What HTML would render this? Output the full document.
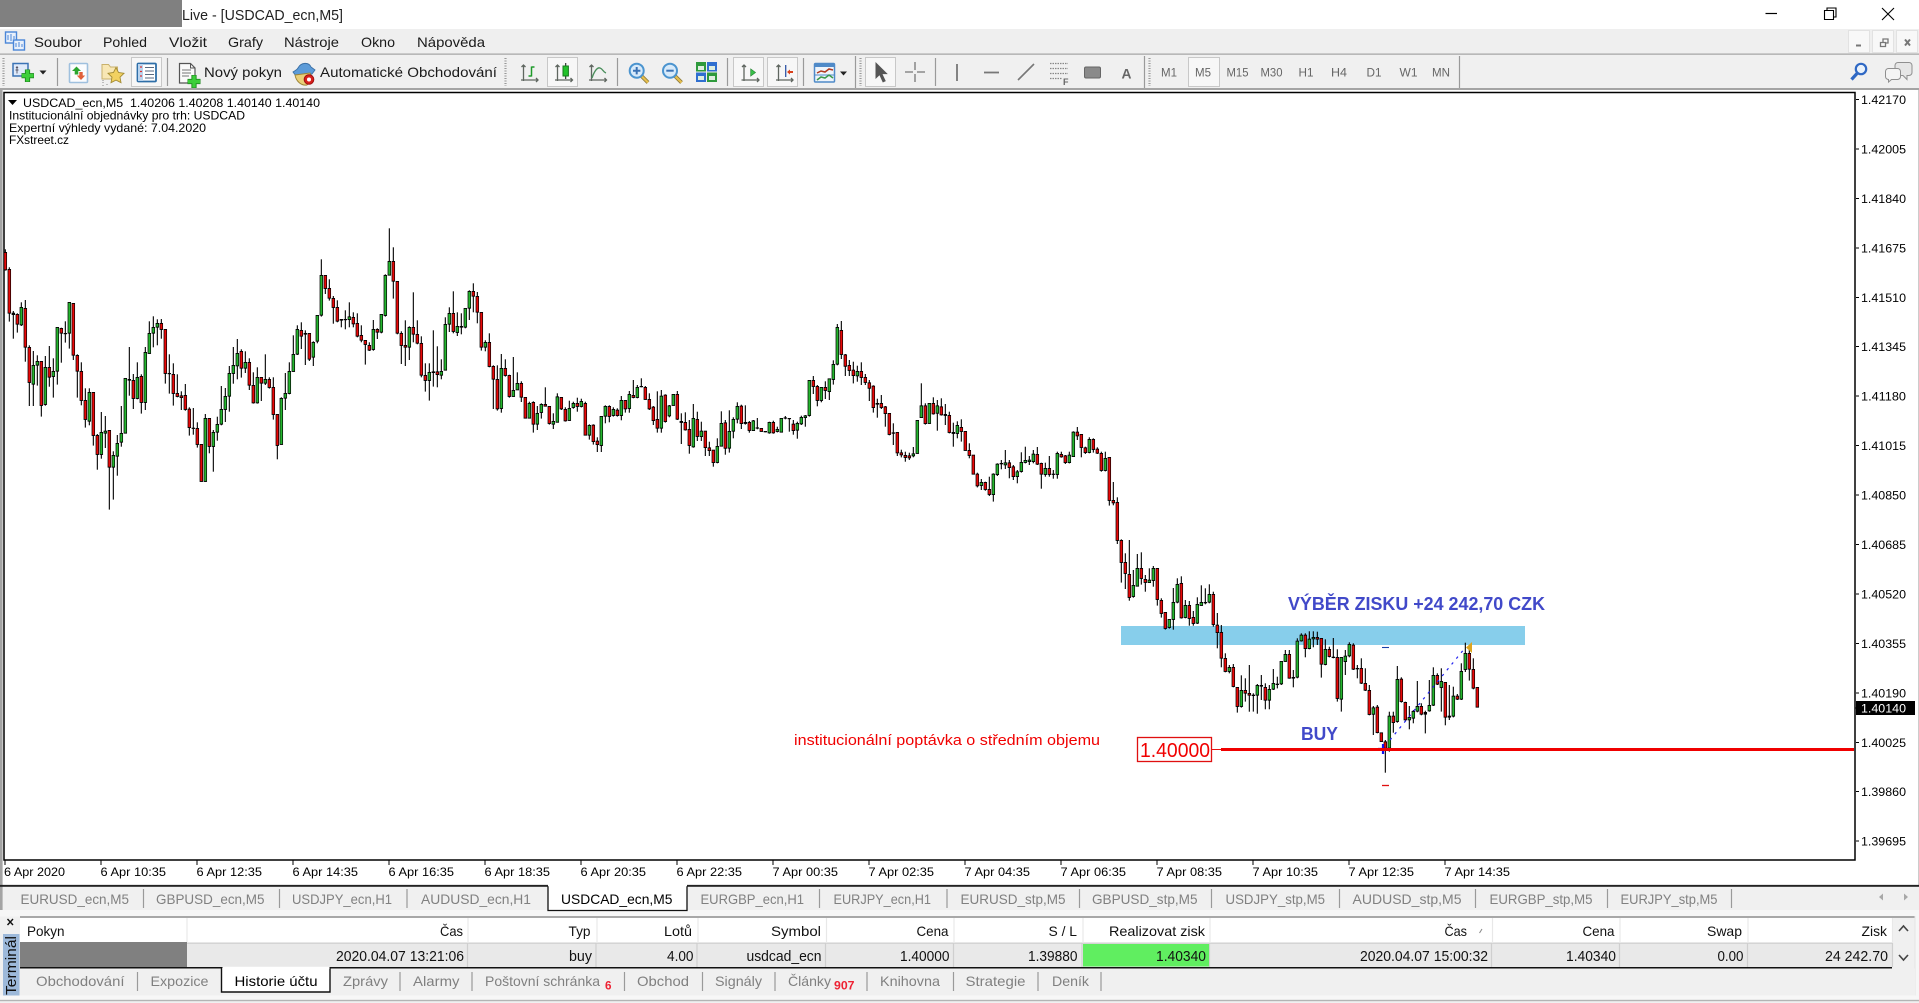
<!DOCTYPE html>
<html lang="cs"><head><meta charset="utf-8"><title>Live - [USDCAD_ecn,M5]</title>
<style>
html,body{margin:0;padding:0;background:#fff;width:1919px;height:1003px;overflow:hidden}
svg{display:block;position:absolute;left:0;top:0}
text{font-family:"Liberation Sans",sans-serif;white-space:pre}
.m{font-size:14px;fill:#1a1a1a}
.c{font-size:12px;fill:#000}
.t{font-size:14px;fill:#808080}
.h{font-size:14px;fill:#111;text-anchor:end}
.v{font-size:14.5px;fill:#111;text-anchor:end}
.tf{font-size:12px;fill:#666}
.b{font-size:11.5px;font-weight:bold;fill:#ee2233}
.an{font-size:18px;font-weight:bold;fill:#4149c9}
.sep{stroke:#9a9a9a;stroke-width:1.2}
.hs{stroke:#e8e8e8;stroke-width:1.2}
.vs{stroke:#cfcfcf;stroke-width:1.2}
.act{fill:#f7f7f7;stroke:#c8c8c8;stroke-width:1}
</style></head><body>
<svg xmlns="http://www.w3.org/2000/svg" width="1919" height="1003" viewBox="0 0 1919 1003">
<rect width="1919" height="1003" fill="#fff"/>
<!-- title bar -->
<rect x="0" y="0" width="182" height="27" fill="#808080"/>
<text x="182" y="20" font-size="14.5" textLength="161" lengthAdjust="spacingAndGlyphs" fill="#222">Live - [USDCAD_ecn,M5]</text>
<path d="M1765.5 13.5H1777" stroke="#000" stroke-width="1.2"/>
<path d="M1824.5 10.5h9v9h-9zM1827 10.5v-2.500h9v9h-2.500" fill="none" stroke="#000" stroke-width="1.1"/>
<path d="M1882 8l12 12M1894 8l-12 12" stroke="#000" stroke-width="1.1"/>
<!-- menu bar -->
<rect x="0" y="29" width="1919" height="25" fill="#efefef"/>
<g fill="none" stroke="#4a86d8" stroke-width="1.4"><rect x="5.500" y="32" width="11" height="11" fill="#e8f0fb"/><rect x="13.500" y="40" width="11" height="10" fill="#e8f0fb"/></g>
<path d="M8 40v-5M11 41v-7M14 39v-3M16 47v-4M19 47v-5M22 47v-3" stroke="#4a86d8"/>
<text class="m" x="34" y="47" textLength="48" lengthAdjust="spacingAndGlyphs">Soubor</text>
<text class="m" x="103" y="47" textLength="44" lengthAdjust="spacingAndGlyphs">Pohled</text>
<text class="m" x="169" y="47" textLength="38" lengthAdjust="spacingAndGlyphs">Vložit</text>
<text class="m" x="228" y="47" textLength="35" lengthAdjust="spacingAndGlyphs">Grafy</text>
<text class="m" x="284" y="47" textLength="55" lengthAdjust="spacingAndGlyphs">Nástroje</text>
<text class="m" x="361" y="47" textLength="34" lengthAdjust="spacingAndGlyphs">Okno</text>
<text class="m" x="417" y="47" textLength="68" lengthAdjust="spacingAndGlyphs">Nápověda</text>
<g fill="#f8f8f8" stroke="#e2e2e2"><rect x="1848.500" y="30.500" width="21" height="22"/><rect x="1872.500" y="30.500" width="21" height="22"/><rect x="1896.500" y="30.500" width="21" height="22"/></g>
<path d="M1856 45.500h5" stroke="#777" stroke-width="2"/>
<path d="M1880.500 42.500h5v4h-5zM1883 42v-3h5v4h-2" fill="none" stroke="#777" stroke-width="1.300"/>
<path d="M1905 39.500l5 6M1910 39.500l-5 6" stroke="#777" stroke-width="2"/>
<rect x="0" y="53.500" width="1919" height="1.300" fill="#a6a6a6"/>
<!-- toolbar -->
<rect x="0" y="55" width="1919" height="33" fill="#f0f0f0"/>
<rect x="0" y="88" width="1919" height="2" fill="#a4a4a4"/>
<g stroke="#999" stroke-dasharray="1 1.500" stroke-width="2.200">
<path d="M3.500 58V86M505.500 58V86M860.500 58V86M1149.500 58V86"/></g>
<rect class="act" x="131.500" y="57.500" width="30" height="29"/>
<rect class="act" x="547.500" y="57.500" width="30" height="29"/>
<rect class="act" x="733.500" y="57.500" width="30" height="29"/>
<rect class="act" x="767.500" y="57.500" width="30" height="29"/>
<rect class="act" x="865.500" y="57.500" width="30" height="29"/>
<rect class="act" x="1188.500" y="57.500" width="31" height="29"/>
<path class="sep" d="M57.500 58V86M167.500 58V86M617.500 58V86M727.500 58V86M803.500 58V86M855.500 56V88M935.500 58V86M1144.500 56V88M1459.500 56V88"/>
<!-- new chart -->
<rect x="13" y="63.500" width="15" height="12.500" fill="#dfeafa" stroke="#3b73b5" stroke-width="1.500"/>
<path d="M17 73.500v-7M15.500 70h3M17 66.500l-1 1.500M17 66.500l1 1.500" stroke="#556" stroke-width=".9" fill="none"/>
<path d="M27.500 69.500v12.500M21.500 75.700h12.500" stroke="#1f8a1f" stroke-width="5.200"/>
<path d="M27.500 70v11.500M22 75.700h11.500" stroke="#3ccf3a" stroke-width="3.400"/>
<path d="M39.500 70.500h7l-3.500 4z" fill="#222"/>
<!-- market watch -->
<rect x="69.500" y="63.500" width="18" height="19" rx="1" fill="#fbfcfe" stroke="#9fc0de" stroke-width="1.600"/>
<path d="M76.500 66.500l-4.500 4.500h2.700v3.500h3.600v-3.500h2.700z" fill="#2ba52f"/>
<path d="M81 80l4.200-4.500h-2.500v-3.500h-3.400v3.500h-2.500z" fill="#e0603a"/>
<!-- favorites -->
<path d="M102 64.500h6.500l2 2.500h7v12h-15.500z" fill="#f8e7b4" stroke="#c9b16c"/>
<path d="M103 80v3M103 85v1M107 84v2" stroke="#888" stroke-dasharray="1 1"/>
<path d="M116 67.500l2.500 5 5.500.8-4 3.900 1 5.500-5-2.600-5 2.600 1-5.500-4-3.900 5.500-.8z" fill="#f2d160" stroke="#a38b33" stroke-width=".9"/>
<!-- navigator -->
<rect x="137.500" y="63.500" width="18.500" height="18" rx="1" fill="#fff" stroke="#2f6fa8" stroke-width="1.800"/>
<rect x="138" y="64" width="5" height="17" fill="#b9d4ef"/>
<path d="M145 67.500h9M145 71h9M145 74.500h9M145 78h9" stroke="#5a6a80"/><path d="M140 67h2M140 71.500h2M140 76h2" stroke="#d33" stroke-width="1.300"/>
<!-- new order -->
<path d="M179.500 63.500h11l4.500 4.500v15h-15.500z" fill="#fafafa" stroke="#555" stroke-width="1.200"/><path d="M182 70h9M182 73h9M182 76h7" stroke="#777"/><path d="M190.500 63.500v4.500h4.500" fill="none" stroke="#555"/>
<path d="M194 75v13M187.500 81.500h13" stroke="#1f8a1f" stroke-width="5.200"/>
<path d="M194 75.500v12M188 81.500h12" stroke="#3ccf3a" stroke-width="3.400"/>
<text class="m" x="204" y="77" textLength="78" lengthAdjust="spacingAndGlyphs">Nový pokyn</text>
<!-- auto trading -->
<path d="M293 72c3-2 4-2 5-4 3-6 11-6 13-1l4 3-3 4-16 2z" fill="#5c9bd8" stroke="#3a6fa5" stroke-width=".9"/>
<path d="M295 75l15-2 3 6-6 6c-6 1-11-4-12-10z" fill="#e9cf78" stroke="#9c8436" stroke-width=".9"/>
<circle cx="309" cy="79.500" r="4.800" fill="#d8201c" stroke="#a01010"/><circle cx="309" cy="79.500" r="2" fill="#fff"/>
<text class="m" x="320" y="77" textLength="177" lengthAdjust="spacingAndGlyphs">Automatické Obchodování</text>
<!-- chart-type icons -->
<g fill="none" stroke="#5f6660" stroke-width="1.300">
<path d="M523.500 65v16M521 80h17M521.500 67l2-2 2 2M536 78l2 2-2 2"/>
<path d="M557.500 65v16M555 80h17.500M555.500 67l2-2 2 2M570.500 78l2 2-2 2"/>
<path d="M591.500 65v16M589 80h17.500M589.500 67l2-2 2 2M604.500 78l2 2-2 2"/>
<path d="M744 65v16M741.500 80h17.500M742 67l2-2 2 2M757 78l2 2-2 2"/>
<path d="M778.500 65v16M776 80h17M776.500 67l2-2 2 2M791 78l2 2-2 2"/>
</g>
<path d="M531.500 66.500v10M531.500 67h3M531.500 76h-3" stroke="#1e9a2a" stroke-width="1.500" fill="none"/>
<path d="M565.700 63v16" stroke="#222" stroke-width="1.100"/><rect x="563" y="66" width="5.400" height="10" fill="#22c22a" stroke="#167a1c"/>
<path d="M592 78c2-6 5-11 8-10s3 4 6 5" fill="none" stroke="#4b8f5c" stroke-width="1.400"/>
<path d="M750.700 69v7l4.800-3.500z" fill="#39c04a" stroke="#2a8a38" stroke-width=".7"/>
<path d="M785.700 65v12" stroke="#2f55a5" stroke-width="1.300"/><path d="M787 72l3-2.500v1.500h3v2h-3v1.500z" fill="#d8401a"/>
<!-- zoom icons -->
<path d="M641.500 76l6.500 6.500" stroke="#8c7a3a" stroke-width="3.800"/><path d="M642 76.500l6 6" stroke="#e8bf4c" stroke-width="2.200"/>
<circle cx="636.700" cy="70.700" r="7" fill="#d7eafa" stroke="#4b94cf" stroke-width="2"/><path d="M633 70.700h7.400M636.700 67v7.400" stroke="#3a72b4" stroke-width="2"/>
<path d="M675 76l6.500 6.500" stroke="#8c7a3a" stroke-width="3.800"/><path d="M675.500 76.500l6 6" stroke="#e8bf4c" stroke-width="2.200"/>
<circle cx="670" cy="70.700" r="7" fill="#d7eafa" stroke="#4b94cf" stroke-width="2"/><path d="M666.300 70.700h7.400" stroke="#3a72b4" stroke-width="2"/>
<rect x="696" y="62" width="10" height="9.500" fill="#2e9a3c"/><rect x="707" y="62" width="10" height="9.500" fill="#2f6fd0"/><rect x="696" y="72.500" width="10" height="9.500" fill="#2f6fd0"/><rect x="707" y="72.500" width="10" height="9.500" fill="#2e9a3c"/>
<path d="M698 66h6v4h-6zM709 66h6v4h-6zM698 76h6v4h-6zM709 76h6v4h-6z" fill="#dfeee0"/>
<!-- indicators -->
<rect x="814.500" y="63.500" width="20" height="18.500" rx="1" fill="#eef4fb" stroke="#4f8ac8" stroke-width="1.500"/>
<rect x="815" y="64" width="19" height="3" fill="#4f8ac8"/>
<path d="M817 73l4-2 4 1 4-3 4 1" fill="none" stroke="#b03a20" stroke-width="1.500"/><path d="M815 75h20" stroke="#4f8ac8"/><path d="M817 80l4-3 4 1 4-3 4 3" fill="none" stroke="#3a9a4a" stroke-width="1.500"/>
<path d="M840 71.500h7l-3.500 4z" fill="#222"/>
<!-- cursor tools -->
<path d="M875.500 62v17l4-3.700 3.300 7.200 3-1.400-3.300-7h5.300z" fill="#555"/>
<path d="M905 72h8M917 72h8M915 62v8M915 74v8" stroke="#777" stroke-width="1.300" fill="none"/>
<path d="M957 64v17" stroke="#777" stroke-width="1.800"/>
<path d="M984 72.500h15" stroke="#777" stroke-width="1.800"/>
<path d="M1018 80l16-16" stroke="#777" stroke-width="1.600"/>
<path d="M1050 63.500h18M1050 68.500h18M1050 73.500h18M1050 78.500h12" stroke="#888" stroke-dasharray="1.500 1" stroke-width="1.300"/>
<text x="1063" y="85" font-size="9" font-weight="bold" fill="#666">F</text>
<rect x="1084.500" y="67" width="16" height="11" rx="1.500" fill="#8a8a8a" stroke="#666"/>
<text x="1121.500" y="78.500" font-size="14" font-weight="bold" fill="#666" textLength="10" lengthAdjust="spacingAndGlyphs">A</text>
<text class="tf" x="1161" y="76.500" textLength="16" lengthAdjust="spacingAndGlyphs">M1</text>
<text class="tf" x="1195" y="76.500" textLength="16" lengthAdjust="spacingAndGlyphs">M5</text>
<text class="tf" x="1226.500" y="76.500" textLength="22" lengthAdjust="spacingAndGlyphs">M15</text>
<text class="tf" x="1260.500" y="76.500" textLength="22" lengthAdjust="spacingAndGlyphs">M30</text>
<text class="tf" x="1298.500" y="76.500" textLength="15" lengthAdjust="spacingAndGlyphs">H1</text>
<text class="tf" x="1331" y="76.500" textLength="16" lengthAdjust="spacingAndGlyphs">H4</text>
<text class="tf" x="1366.500" y="76.500" textLength="15" lengthAdjust="spacingAndGlyphs">D1</text>
<text class="tf" x="1399.500" y="76.500" textLength="18" lengthAdjust="spacingAndGlyphs">W1</text>
<text class="tf" x="1432" y="76.500" textLength="18" lengthAdjust="spacingAndGlyphs">MN</text>
<circle cx="1861" cy="69" r="5.200" fill="#eaf2fb" stroke="#2f68c4" stroke-width="2.200"/><path d="M1857 73.500l-5.500 6" stroke="#2f68c4" stroke-width="3.200"/>
<path d="M1898 62.500h11a3 3 0 0 1 3 3v7a3 3 0 0 1-3 3h-2v4l-4-4h-5a3 3 0 0 1-3-3v-7a3 3 0 0 1 3-3z" fill="#e6e6e6" stroke="#8f8f8f"/>
<path d="M1888.500 68.500h9a3 3 0 0 1 3 3v5a3 3 0 0 1-3 3h-6l-3 2.500v-2.500a3 3 0 0 1-3-3v-5a3 3 0 0 1 3-3z" fill="#f4f4f4" stroke="#8f8f8f"/>

<!-- chart frame -->
<rect x="0" y="90" width="2.600" height="796" fill="#a4a4a4"/>
<rect x="4" y="92.500" width="1851" height="767.500" fill="#fff" stroke="#000" stroke-width="1.500"/>
<path d="M1918.500 90V886" stroke="#ccc"/>
<path d="M8 100h9l-4.500 5z" fill="#000"/>
<text class="c" x="23" y="107" textLength="297" lengthAdjust="spacingAndGlyphs">USDCAD_ecn,M5  1.40206 1.40208 1.40140 1.40140</text>
<text class="c" x="9" y="119.500" textLength="236" lengthAdjust="spacingAndGlyphs">Institucionální objednávky pro trh: USDCAD</text>
<text class="c" x="9" y="132" textLength="197" lengthAdjust="spacingAndGlyphs">Expertní výhledy vydané: 7.04.2020</text>
<text class="c" x="9" y="144" textLength="60" lengthAdjust="spacingAndGlyphs">FXstreet.cz</text>

<!-- annotations under candles -->
<rect x="1121" y="626" width="404" height="19" fill="#87ceeb"/>
<g id="candles"></g>
<path d="M1390 740L1465 648" stroke="#2222ee" stroke-dasharray="2.500 5" stroke-width="1.200" fill="none"/>
<path d="M1383 744v10M1378 749h10" stroke="#1111ee" stroke-width="2.200"/>
<path d="M1472 642v11l-6-5.500z" fill="#dda520"/>
<path d="M1382 647.500h7" stroke="#1a3fa8" stroke-width="1.100"/>
<path d="M1382 785.500h7" stroke="#e01010" stroke-width="1.300"/>
<path d="M1212 749.500h9" stroke="#e81010" stroke-width="1"/>
<path d="M1221 749.500H1854" stroke="#f00000" stroke-width="3"/>
<rect x="1137.500" y="737.500" width="74" height="24" fill="#fff" stroke="#e01010" stroke-width="1.300"/>
<text x="1140" y="757" font-size="20" fill="#f00000" textLength="70" lengthAdjust="spacingAndGlyphs">1.40000</text>
<text class="an" x="1288" y="610" textLength="257" lengthAdjust="spacingAndGlyphs">VÝBĚR ZISKU +24 242,70 CZK</text>
<text class="an" x="1301" y="740" textLength="37" lengthAdjust="spacingAndGlyphs">BUY</text>
<text x="794" y="745" font-size="15" fill="#f00000" textLength="306" lengthAdjust="spacingAndGlyphs">institucionální poptávka o středním objemu</text>

<!-- price axis -->
<path d="M1856 99.500h3M1856 149h3M1856 198.500h3M1856 248h3M1856 297.500h3M1856 346.500h3M1856 396h3M1856 445.500h3M1856 495h3M1856 544.500h3M1856 594h3M1856 643.500h3M1856 693h3M1856 742.500h3M1856 791.500h3M1856 841h3" stroke="#000"/>
<g>
<text class="c" x="1861" y="104" textLength="45" lengthAdjust="spacingAndGlyphs">1.42170</text>
<text class="c" x="1861" y="153.500" textLength="45" lengthAdjust="spacingAndGlyphs">1.42005</text>
<text class="c" x="1861" y="203" textLength="45" lengthAdjust="spacingAndGlyphs">1.41840</text>
<text class="c" x="1861" y="252.500" textLength="45" lengthAdjust="spacingAndGlyphs">1.41675</text>
<text class="c" x="1861" y="302" textLength="45" lengthAdjust="spacingAndGlyphs">1.41510</text>
<text class="c" x="1861" y="351" textLength="45" lengthAdjust="spacingAndGlyphs">1.41345</text>
<text class="c" x="1861" y="400.500" textLength="45" lengthAdjust="spacingAndGlyphs">1.41180</text>
<text class="c" x="1861" y="450" textLength="45" lengthAdjust="spacingAndGlyphs">1.41015</text>
<text class="c" x="1861" y="499.500" textLength="45" lengthAdjust="spacingAndGlyphs">1.40850</text>
<text class="c" x="1861" y="549" textLength="45" lengthAdjust="spacingAndGlyphs">1.40685</text>
<text class="c" x="1861" y="598.500" textLength="45" lengthAdjust="spacingAndGlyphs">1.40520</text>
<text class="c" x="1861" y="648" textLength="45" lengthAdjust="spacingAndGlyphs">1.40355</text>
<text class="c" x="1861" y="697.500" textLength="45" lengthAdjust="spacingAndGlyphs">1.40190</text>
<text class="c" x="1861" y="747" textLength="45" lengthAdjust="spacingAndGlyphs">1.40025</text>
<text class="c" x="1861" y="796" textLength="45" lengthAdjust="spacingAndGlyphs">1.39860</text>
<text class="c" x="1861" y="845.500" textLength="45" lengthAdjust="spacingAndGlyphs">1.39695</text>
</g>
<rect x="1856" y="701" width="59" height="14" fill="#000"/>
<path d="M1855 708h3" stroke="#000"/>
<text class="c" x="1861" y="712.500" textLength="45" lengthAdjust="spacingAndGlyphs" style="fill:#fff">1.40140</text>

<!-- time axis -->
<path d="M5 860v5M101 860v5M197 860v5M293 860v5M389 860v5M485 860v5M581 860v5M677 860v5M773 860v5M869 860v5M965 860v5M1061 860v5M1157 860v5M1253 860v5M1349 860v5M1445 860v5" stroke="#000"/>
<text class="c" x="4" y="876" textLength="61" lengthAdjust="spacingAndGlyphs">6 Apr 2020</text>
<text class="c" x="100.500" y="876" textLength="65.500" lengthAdjust="spacingAndGlyphs">6 Apr 10:35</text>
<text class="c" x="196.500" y="876" textLength="65.500" lengthAdjust="spacingAndGlyphs">6 Apr 12:35</text>
<text class="c" x="292.500" y="876" textLength="65.500" lengthAdjust="spacingAndGlyphs">6 Apr 14:35</text>
<text class="c" x="388.500" y="876" textLength="65.500" lengthAdjust="spacingAndGlyphs">6 Apr 16:35</text>
<text class="c" x="484.500" y="876" textLength="65.500" lengthAdjust="spacingAndGlyphs">6 Apr 18:35</text>
<text class="c" x="580.500" y="876" textLength="65.500" lengthAdjust="spacingAndGlyphs">6 Apr 20:35</text>
<text class="c" x="676.500" y="876" textLength="65.500" lengthAdjust="spacingAndGlyphs">6 Apr 22:35</text>
<text class="c" x="772.500" y="876" textLength="65.500" lengthAdjust="spacingAndGlyphs">7 Apr 00:35</text>
<text class="c" x="868.500" y="876" textLength="65.500" lengthAdjust="spacingAndGlyphs">7 Apr 02:35</text>
<text class="c" x="964.500" y="876" textLength="65.500" lengthAdjust="spacingAndGlyphs">7 Apr 04:35</text>
<text class="c" x="1060.500" y="876" textLength="65.500" lengthAdjust="spacingAndGlyphs">7 Apr 06:35</text>
<text class="c" x="1156.500" y="876" textLength="65.500" lengthAdjust="spacingAndGlyphs">7 Apr 08:35</text>
<text class="c" x="1252.500" y="876" textLength="65.500" lengthAdjust="spacingAndGlyphs">7 Apr 10:35</text>
<text class="c" x="1348.500" y="876" textLength="65.500" lengthAdjust="spacingAndGlyphs">7 Apr 12:35</text>
<text class="c" x="1444.500" y="876" textLength="65.500" lengthAdjust="spacingAndGlyphs">7 Apr 14:35</text>

<!-- chart tabs -->
<rect x="0" y="886" width="1919" height="117" fill="#f0f0f0"/>
<rect x="0" y="886" width="2.600" height="26" fill="#a4a4a4"/>
<rect x="0" y="885.500" width="1919" height="1.300" fill="#222"/>
<rect x="0" y="910" width="1919" height="6" fill="#f6f6f6"/>
<path class="sep" d="M143.500 889V908M279.500 889V908M407 889V908M819.500 889V908M947 889V908M1079.500 889V908M1211.500 889V908M1339.500 889V908M1475.500 889V908M1607.500 889V908M1731.500 889V908"/>
<rect x="548" y="885" width="139" height="25" fill="#fff"/>
<path d="M548 886v24.500h139V886" fill="none" stroke="#111" stroke-width="1.300"/>
<rect x="548.500" y="884" width="138" height="3" fill="#fff"/>
<path d="M548 885.500H0M687 885.500H1919" stroke="#222" stroke-width="1.300"/>
<text class="t" x="20.500" y="904" textLength="108.500" lengthAdjust="spacingAndGlyphs">EURUSD_ecn,M5</text>
<text class="t" x="156" y="904" textLength="108.500" lengthAdjust="spacingAndGlyphs">GBPUSD_ecn,M5</text>
<text class="t" x="292" y="904" textLength="100" lengthAdjust="spacingAndGlyphs">USDJPY_ecn,H1</text>
<text class="t" x="421" y="904" textLength="110" lengthAdjust="spacingAndGlyphs">AUDUSD_ecn,H1</text>
<text class="t" x="561" y="904" textLength="111.500" lengthAdjust="spacingAndGlyphs" style="fill:#000">USDCAD_ecn,M5</text>
<text class="t" x="700.500" y="904" textLength="103.500" lengthAdjust="spacingAndGlyphs">EURGBP_ecn,H1</text>
<text class="t" x="833.500" y="904" textLength="97.500" lengthAdjust="spacingAndGlyphs">EURJPY_ecn,H1</text>
<text class="t" x="960.500" y="904" textLength="105" lengthAdjust="spacingAndGlyphs">EURUSD_stp,M5</text>
<text class="t" x="1092" y="904" textLength="105.500" lengthAdjust="spacingAndGlyphs">GBPUSD_stp,M5</text>
<text class="t" x="1225.500" y="904" textLength="99.500" lengthAdjust="spacingAndGlyphs">USDJPY_stp,M5</text>
<text class="t" x="1352.500" y="904" textLength="109" lengthAdjust="spacingAndGlyphs">AUDUSD_stp,M5</text>
<text class="t" x="1489.500" y="904" textLength="103" lengthAdjust="spacingAndGlyphs">EURGBP_stp,M5</text>
<text class="t" x="1620.500" y="904" textLength="97" lengthAdjust="spacingAndGlyphs">EURJPY_stp,M5</text>
<path d="M1883 893.500l-4 3.500 4 3.500zM1904 893.500l4 3.500-4 3.500z" fill="#a8a8a8"/>

<!-- terminal table -->
<path d="M0 916H1919" stroke="#f6f6f6"/>
<rect x="20" y="916" width="1895" height="2" fill="#a8a8a8"/>
<rect x="20" y="918" width="1872" height="25" fill="#fff"/>
<rect x="20" y="943" width="1872" height="24" fill="#e9e9e9"/>
<rect x="1892" y="918" width="23" height="49" fill="#f0f0f0"/>
<rect x="20" y="942.500" width="1872" height="1.300" fill="#cfcfcf"/>
<path class="hs" d="M187 918V943M468 918V943M597 918V943M698 918V943M826.500 918V943M954 918V943M1083 918V943M1210 918V943M1492.500 918V943M1620 918V943M1748 918V943M1892.500 918V943"/>
<path class="vs" d="M467.500 943V967M596 943V967M697 943V967M825.500 943V967M953.500 943V967M1082 943V967M1209.500 943V967M1491.500 943V967M1619.500 943V967M1747.500 943V967M1892.500 943V967"/>
<rect x="20" y="942" width="167" height="25" fill="#808080"/>
<rect x="1083" y="944" width="126" height="22.500" fill="#60ee60"/>
<rect x="20" y="967" width="1872" height="1.500" fill="#111"/>
<text class="h" x="27" y="936" textLength="37.500" lengthAdjust="spacingAndGlyphs" style="text-anchor:start">Pokyn</text>
<text class="h" x="463" y="936" textLength="23" lengthAdjust="spacingAndGlyphs">Čas</text>
<text class="h" x="590.500" y="936" textLength="22" lengthAdjust="spacingAndGlyphs">Typ</text>
<text class="h" x="692" y="936" textLength="28" lengthAdjust="spacingAndGlyphs">Lotů</text>
<text class="h" x="821" y="936" textLength="50" lengthAdjust="spacingAndGlyphs">Symbol</text>
<text class="h" x="948.500" y="936" textLength="32" lengthAdjust="spacingAndGlyphs">Cena</text>
<text class="h" x="1077" y="936" textLength="28.500" lengthAdjust="spacingAndGlyphs">S / L</text>
<text class="h" x="1205" y="936" textLength="96" lengthAdjust="spacingAndGlyphs">Realizovat zisk</text>
<text class="h" x="1467" y="936" textLength="22.500" lengthAdjust="spacingAndGlyphs">Čas</text>
<path d="M1479.500 933l2.500-4" stroke="#888"/>
<text class="h" x="1614.500" y="936" textLength="32" lengthAdjust="spacingAndGlyphs">Cena</text>
<text class="h" x="1742" y="936" textLength="35" lengthAdjust="spacingAndGlyphs">Swap</text>
<text class="h" x="1887" y="936" textLength="25.500" lengthAdjust="spacingAndGlyphs">Zisk</text>
<text class="v" x="464" y="961" textLength="128" lengthAdjust="spacingAndGlyphs">2020.04.07 13:21:06</text>
<text class="v" x="592" y="961" textLength="23" lengthAdjust="spacingAndGlyphs">buy</text>
<text class="v" x="693.500" y="961" textLength="26.500" lengthAdjust="spacingAndGlyphs">4.00</text>
<text class="v" x="821.500" y="961" textLength="75" lengthAdjust="spacingAndGlyphs">usdcad_ecn</text>
<text class="v" x="949.500" y="961" textLength="49.500" lengthAdjust="spacingAndGlyphs">1.40000</text>
<text class="v" x="1077.500" y="961" textLength="49.500" lengthAdjust="spacingAndGlyphs">1.39880</text>
<text class="v" x="1206" y="961" textLength="50" lengthAdjust="spacingAndGlyphs">1.40340</text>
<text class="v" x="1488" y="961" textLength="128" lengthAdjust="spacingAndGlyphs">2020.04.07 15:00:32</text>
<text class="v" x="1616" y="961" textLength="50" lengthAdjust="spacingAndGlyphs">1.40340</text>
<text class="v" x="1743.500" y="961" textLength="26" lengthAdjust="spacingAndGlyphs">0.00</text>
<text class="v" x="1888" y="961" textLength="63" lengthAdjust="spacingAndGlyphs">24 242.70</text>
<path d="M1899 931l4.500-5 4.500 5" fill="none" stroke="#444" stroke-width="1.600"/>
<path d="M1899 955l4.500 5 4.500-5" fill="none" stroke="#444" stroke-width="1.600"/>
<rect x="1915" y="916" width="4" height="84" fill="#f6f6f6"/>
<rect x="1914.500" y="916" width="1" height="80" fill="#e4e4e4"/>

<!-- terminal side -->
<path d="M7.500 919l5.500 6M13 919l-5.500 6" stroke="#111" stroke-width="1.400"/>
<rect x="3" y="934" width="16.500" height="62" fill="#9db9da"/>
<text transform="translate(16 995) rotate(-90)" font-size="14.500" textLength="59" lengthAdjust="spacingAndGlyphs" fill="#111">Terminál</text>

<!-- terminal tabs -->
<rect x="20" y="968.500" width="1895" height="27" fill="#f0f0f0"/>
<path class="sep" d="M137.500 972V991M400 972V991M472 972V991M624.500 972V991M702.500 972V991M775 972V991M867 972V991M953.500 972V991M1038 972V991M1101 972V991"/>
<rect x="221.500" y="968" width="108.500" height="24" fill="#fff"/>
<path d="M221.500 968v24h108.500V968" fill="none" stroke="#111" stroke-width="1.400"/>
<rect x="222.500" y="966.800" width="107" height="2.300" fill="#fff"/>
<text class="t" x="36" y="986" textLength="88.500" lengthAdjust="spacingAndGlyphs">Obchodování</text>
<text class="t" x="150.500" y="986" textLength="58" lengthAdjust="spacingAndGlyphs">Expozice</text>
<text class="t" x="234.500" y="986" textLength="83" lengthAdjust="spacingAndGlyphs" style="fill:#000">Historie účtu</text>
<text class="t" x="343" y="986" textLength="45" lengthAdjust="spacingAndGlyphs">Zprávy</text>
<text class="t" x="413" y="986" textLength="46.500" lengthAdjust="spacingAndGlyphs">Alarmy</text>
<text class="t" x="485" y="986" textLength="115" lengthAdjust="spacingAndGlyphs">Poštovní schránka</text>
<text class="b" x="605" y="989.500" textLength="6.500" lengthAdjust="spacingAndGlyphs">6</text>
<text class="t" x="637" y="986" textLength="52" lengthAdjust="spacingAndGlyphs">Obchod</text>
<text class="t" x="715" y="986" textLength="47" lengthAdjust="spacingAndGlyphs">Signály</text>
<text class="t" x="788" y="986" textLength="43" lengthAdjust="spacingAndGlyphs">Články</text>
<text class="b" x="834" y="989.500" textLength="20.500" lengthAdjust="spacingAndGlyphs">907</text>
<text class="t" x="880" y="986" textLength="60" lengthAdjust="spacingAndGlyphs">Knihovna</text>
<text class="t" x="965.500" y="986" textLength="60" lengthAdjust="spacingAndGlyphs">Strategie</text>
<text class="t" x="1052" y="986" textLength="37" lengthAdjust="spacingAndGlyphs">Deník</text>
<rect x="0" y="995.500" width="1919" height="4.500" fill="#f7f7f7"/>
<rect x="0" y="999.800" width="1919" height="1.400" fill="#b4b4b4"/>
</svg>
<script>
var S=[[220,"r97,150,88,152 r148,280,142,305 k279,284,273,356 r283,313,280,338 g262,315,247,318 r265,382,240,425 r382,488,376,558 g436,493,393,558 g424,436,406,497 r424,557,424,590 g442,554,408,557 r442,472,378,500 g454,470,415,533 g322,454,322,494 r325,340,323,428 k340,341,304,368 g247,340,247,386 r250,406,250,420 r406,454,403,533 r454,542,427,556 r541,599,505,623 g517,604,505,616 r517,647,517,677 r646,704,642,749 g637,704,576,716 g633,640,588,684 r631,742,631,869 g706,742,694,839 g670,709,645,767 g640,667,558,680 g475,640,475,640 k478,481,381,527 r481,536,462,567 g472,536,427,538 r469,548,463,581 g397,548,381,570 g340,401,304,401 g322,340,289,382 g310,322,298,376 r310,329,297,356 r328,461,328,491 k460,461,403,521 r463,521,430,557 r520,530,463,532 r527,533,514,570 r526,569,492,572 r567,623,562,647 k624,625,564,644 r625,674,607,683 r673,785,673,785 g595,785,582,785 r595,680,595,700 g637,680,630,755 g613,637,590,662 g568,613,498,616 g529,569,504,606 g460,529,438,575 g436,461,381,491 g400,438,357,478 r394,445,388,473 g427,445,394,459 r427,496,415,510 r496,549,457,551 g472,549,442,551 r472,490,472,543 g478,490,403,495 r478,503,472,506 r502,584,472,599 r583,677,583,718 g535,674,532,674 g520,535,459,570 g454,521,427,523 g403,455,346,455 g328,403,316,405 r331,349,307,387 k340,343,331,435 r340,418,340,423 g367,412,364,438 g286,364,286,370 g166,286,118,290 r166,206,166,222 r205,235,178,242 r235,263,228,311 r262,304,241,307 k298,301,298,322 k298,299,271,328 g290,299,247,322 r292,312,277,322 r310,349,280,352 r346,361,316,367 r361,374,361,434 r376,391,367,393 g328,389,300,392 r328,337,325,357 g283,337,283,340 g166,287,163,290 g124,166,25,166 r124,184,82,236 r184,340,184,343 r340,377,334,432 r376,382,301,438 g322,382,319,420 r322,343,217,367 r343,370,301,373 r370,466,349,472 r466,482,430,515 g457,482,430,542 k455,458,331,500 r455,464,379,502 g454,466,418,478 g313,451,292,451 g280,313,262,336 r280,335,214,340 g319,338,277,348 k319,322,280,343 g265,322,265,325 g214,265,211,300 r214,229,190,277 r229,277,216,310 r277,382,277,392 g367,382,361,394 r367,440,340,442 r439,478,436,567 r478,567,436,572"],
[300,"g205,326,162,338 r205,227,178,230 r226,290,224,293 g271,290,171,290 g250,270,217,270 r250,292,244,306 r292,355,292,355 g310,355,305,355 r307,373,304,398 g340,373,318,390 g313,338,310,356 r313,319,262,320 r319,371,319,374 g364,373,340,387 g290,367,280,367 r292,327,292,330 r328,363,322,365 g325,362,302,362 g310,323,305,326 r310,320,293,335 g304,320,296,322 r310,406,305,406 g376,406,373,419 r375,425,373,434 r423,434,412,456 g349,437,349,456 g319,349,316,370 r319,350,316,367 g328,347,322,350 r330,347,325,350 g301,347,288,361 r301,327,301,338 g283,326,273,338 r286,293,240,295 g262,293,255,295 k259,260,235,262 r262,299,258,299 r298,327,280,330 r321,362,318,375 r358,385,274,398 g288,385,270,398 r285,365,283,368 g317,348,315,352 g283,317,283,317 r283,358,273,360 k364,368,340,432 r367,390,337,392 r388,437,360,461 g355,441,312,443 r358,410,335,423 g393,410,365,423 r393,443,393,468 r443,452,425,468 r450,488,450,500 g439,488,415,490 g370,439,334,439 r368,445,360,464 g394,445,331,458 g358,394,352,415 g319,358,307,370 r318,371,314,387 r367,371,316,374 r367,392,363,398 g362,392,360,393 k383,384,354,388 r385,395,385,395 k394,396,393,397 g367,399,365,401 r367,399,362,401 g388,395,380,397 g355,397,355,397 k353,354,348,358 k355,356,354,395 r372,392,360,404 g370,391,365,416 g352,372,347,375 g347,353,345,380 g241,347,241,350 r241,260,228,282 r259,302,255,319 g262,302,262,307 r262,272,244,297 g236,275,236,300 g193,239,181,254 g82,193,72,196 r91,164,63,177 r164,199,162,228 r196,212,180,228 r210,227,185,250 g214,228,197,245 r214,233,187,255 r232,248,222,255 r248,265,240,303 r258,323,256,338 k310,313,296,353 r310,323,285,327 r320,341,318,380 r340,404,340,406 k398,400,370,435 r397,459,397,468 r458,465,449,472 r466,473,455,485 r467,474,458,480 g461,468,441,472 g361,461,361,461 g317,353,250,353 r317,371,310,374 g310,371,310,371 r310,342,292,344 g317,340,300,392 r320,345,295,347 k343,347,312,375 r346,398,335,400 k397,401,368,440 g376,401,364,415 r382,395,358,425 r394,452,394,452 r451,467,430,475 r465,523,465,523 r522,558,518,562 g547,557,537,570 r547,569,545,572 r568,584,530,588 g522,584,520,605 g492,524,490,528 k490,492,480,508 g488,495,450,507 r488,503,480,535 r500,530,495,540 g515,530,510,550 g487,515,457,518 g481,488,440,490 g480,485,468,495 g462,485,450,490 r463,493,441,495 r490,523,488,566 g505,524,488,530 r505,524,468,530 k522,523,510,536 g460,524,455,536 r463,471,455,473 r467,488,465,492 g465,488,455,490 g396,470,394,470 r396,408,381,420 r403,443,403,472 r443,458,440,462 g418,458,412,460 r418,449,415,458 r447,460,442,462 r460,512,455,515 g475,512,455,514 r472,602,472,617 r601,609,546,616"],
[400,"r307,422,292,432 r421,488,418,548 r487,521,460,567 r523,593,420,602 g556,590,510,593 g505,559,462,559 r505,536,457,554 r538,548,525,575 g540,548,505,548 g505,542,498,560 r505,599,505,617 r601,641,595,653 r637,686,637,689 g658,683,658,686 g607,659,564,689 g553,607,535,610 r550,654,529,656 g616,653,600,655 r616,656,603,677 r652,671,633,677 g613,670,592,672 g607,617,556,617 k607,609,565,613 g583,607,553,610 r583,674,575,680"],
[570,"r165,188,129,235 r187,265,165,292 r265,305,250,307 g292,305,285,310 r292,350,282,352 r352,410,352,428 g361,410,316,413 r361,370,325,395 r370,376,285,425 k375,377,370,425 g346,376,342,431 k346,349,315,390 r352,391,340,418 g358,391,345,418 g340,358,297,360 k342,344,320,355 g274,342,274,345 g253,275,240,275 r253,325,240,326 k322,325,300,352 g213,322,205,325 g195,213,190,215 r195,236,190,262 g207,236,184,238 g202,207,184,232 r202,208,185,225 r205,283,205,323 g238,284,208,286 r238,260,230,262 k261,263,204,265 r262,386,238,395 g262,388,262,425 g258,275,240,315 g223,258,217,262 r225,298,220,300 k295,297,285,325 r295,340,265,342 r340,361,295,363 r361,434,345,436 g413,433,408,495 r411,488,405,490 r488,515,488,516 r515,535,510,608 g438,535,425,545 r438,458,425,488 g328,455,288,458 r327,395,322,398 r397,450,395,452 g442,450,408,478 g424,445,420,460 g409,424,333,427 r409,433,400,436 k427,433,422,490 g406,423,330,425 g316,406,292,408 r316,343,310,345 g334,353,295,425 r337,442,337,466 g438,442,345,450 g378,439,350,442 r378,388,372,390 g304,388,280,390 g250,299,218,306 r250,298,232,332 r298,355,265,358 r352,412,352,412"]];
var o="",i=0,col={r:"#e80808",g:"#24b52e"};
S.forEach(function(s){var y0=s[0];s[1].split(" ").forEach(function(c){var k=c[0],v=c.slice(1).split(",").map(function(n){return y0+n/3}),x=5.33+4*i;
o+='<rect x="'+(x-.55).toFixed(2)+'" y="'+v[2].toFixed(1)+'" width="1.1" height="'+(v[3]-v[2]).toFixed(1)+'" fill="#000"/>';
o+='<rect x="'+(x-1.7).toFixed(2)+'" y="'+(v[0]-.3).toFixed(1)+'" width="3.4" height="'+Math.max(1.2,v[1]-v[0]+.6).toFixed(1)+'" fill="#000"/>';
if(k!="k"&&v[1]-v[0]>1.6)o+='<rect x="'+(x-1).toFixed(2)+'" y="'+(v[0]+.6).toFixed(1)+'" width="2" height="'+(v[1]-v[0]-1.2).toFixed(1)+'" fill="'+col[k]+'"/>';
i++})});
document.getElementById("candles").innerHTML=o;
</script>
</body></html>
